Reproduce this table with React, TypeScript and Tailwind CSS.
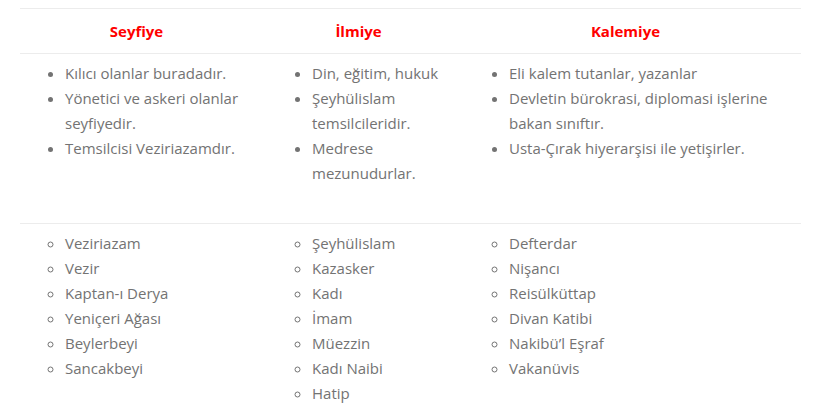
import React from "react";

const cols = [
  {
    title: "Seyfiye",
    a: ["Kılıcı olanlar buradadır.", "Yönetici ve askeri olanlar seyfiyedir.", "Temsilcisi Veziriazamdır."],
    b: ["Veziriazam", "Vezir", "Kaptan-ı Derya", "Yeniçeri Ağası", "Beylerbeyi", "Sancakbeyi"],
  },
  {
    title: "İlmiye",
    a: ["Din, eğitim, hukuk", "Şeyhülislam temsilcileridir.", "Medrese mezunudurlar."],
    b: ["Şeyhülislam", "Kazasker", "Kadı", "İmam", "Müezzin", "Kadı Naibi", "Hatip"],
  },
  {
    title: "Kalemiye",
    a: ["Eli kalem tutanlar, yazanlar", "Devletin bürokrasi, diplomasi işlerine bakan sınıftır.", "Usta-Çırak hiyerarşisi ile yetişirler."],
    b: ["Defterdar", "Nişancı", "Reisülküttap", "Divan Katibi", "Nakibü’l Eşraf", "Vakanüvis"],
  },
];

export default function App() {
  return (
    <div className="bg-white w-[838px] h-[413px] overflow-hidden pt-[8px] text-[#737373] text-[15px] leading-[25px]" style={{ fontFamily: '"Open Sans", "Liberation Sans", sans-serif' }}>
      <div className="ml-[20px] w-[781px] grid grid-cols-[247px_197px_337px]">
        {cols.map((c) => (
          <div key={c.title} className="border-t border-b border-[#ececec] pl-[8px] pr-[22px] h-[46px] flex items-center justify-center">
            <span className="font-bold text-[#ff0000]">{c.title}</span>
          </div>
        ))}
        {cols.map((c) => (
          <div key={c.title + "a"} className="px-[8px] pt-[7px] pb-[37px] border-b border-[#ececec]">
            <ul className="list-disc pl-[37px]">
              {c.a.map((t) => (
                <li key={t}>{t}</li>
              ))}
            </ul>
          </div>
        ))}
        {cols.map((c) => (
          <div key={c.title + "b"} className="px-[8px] pt-[7px]">
            <ul className="list-[circle] pl-[37px]">
              {c.b.map((t) => (
                <li key={t}>{t}</li>
              ))}
            </ul>
          </div>
        ))}
      </div>
    </div>
  );
}
